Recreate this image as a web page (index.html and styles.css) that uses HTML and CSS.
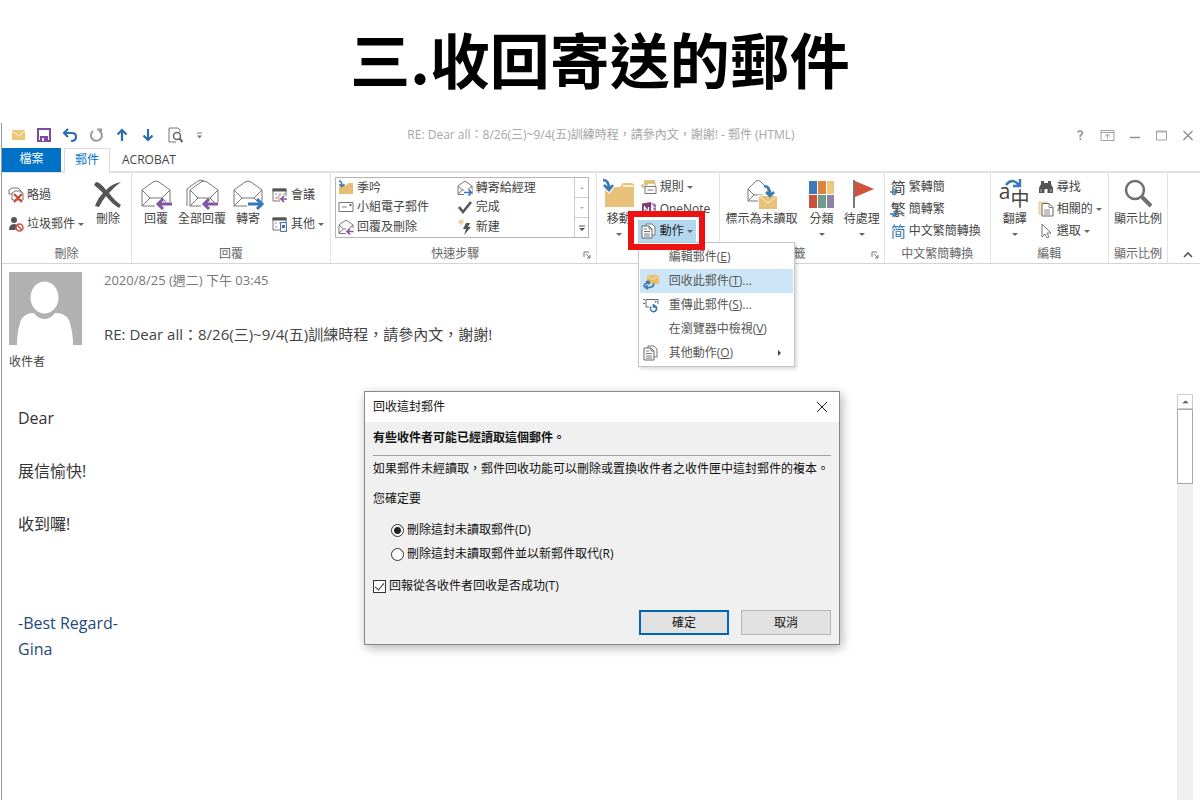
FILE: index.html
```html
<!DOCTYPE html>
<html lang="zh-Hant">
<head>
<meta charset="utf-8">
<meta name="viewport" content="width=device-width, initial-scale=1">
<title>三.收回寄送的郵件</title>
<link rel="stylesheet" href="styles.css">
</head>
<body>
<svg class="defs" aria-hidden="true">
  <symbol id="envelope" viewBox="0 0 32 30">
    <path d="M2 11 13 3q3-2 6 0l11 8v16H2z" fill="#fff" stroke="#777"/>
    <path d="M2 11l8 8h12l8-8M2 27l8-8M30 27l-8-8" fill="none" stroke="#777"/>
  </symbol>
  <symbol id="letter" viewBox="0 0 16 16">
    <path d="M1 6l5.500-4q1.500-1 3 0L15 6v8.500H1z" fill="#fff" stroke="#777"/>
    <path d="M1 6l4.500 4h5L15 6M1 14l4.500-4" fill="none" stroke="#777"/>
  </symbol>
  <symbol id="pages" viewBox="0 0 16 16">
    <path d="M5 3V1h6l3 3v8h-3" fill="#fff" stroke="#777"/>
    <path d="M1 3h7l3 3v9H1z" fill="#fff" stroke="#666"/>
    <path d="M8 3v3h3M3 6h3M3 8.500h6M3 11h6M3 13h6" fill="none" stroke="#777"/>
  </symbol>
  <symbol id="calendar" viewBox="0 0 16 16">
    <path d="M1 2h13v12H1z" fill="#fff" stroke="#777"/>
    <path d="M0.500 1.500h14v3h-14z" fill="#555"/>
    <path d="M3 7h2M7 7h2M11 7h2M3 11h2" stroke="#888"/>
  </symbol>
</svg>
<h1 class="headline">三.收回寄送的郵件</h1>
<main class="window">
  <header class="titlebar">
    <div class="quick">
      <button aria-label="郵件"><svg viewBox="0 0 16 16"><path d="M2 3h13v10H2z" fill="#edc778"/><path d="m2 4 6.500 5L15 4" fill="none" stroke="#fff6e0"/></svg></button>
      <button aria-label="儲存"><svg viewBox="0 0 16 16"><path d="M2 2h12v12H2z" fill="#fff" stroke="#7d4ba0" stroke-width="2"/><path d="M4 9h8v6H4z" fill="#7d4ba0"/><path d="M6 11h2v3H6z" fill="#fff"/></svg></button>
      <button aria-label="復原"><svg viewBox="0 0 16 16"><path d="M6 2 2 6l4 4M2 6h8q4 0 4 4t-5 4" fill="none" stroke="#2e6db0" stroke-width="2.200"/></svg></button>
      <button aria-label="重做"><svg viewBox="0 0 16 16"><path d="M5 4a5.500 5.500 0 1 0 6-0.500M9 2.500h4v4" fill="none" stroke="#9b9b9b" stroke-width="2"/></svg></button>
      <button aria-label="上一個項目"><svg viewBox="0 0 16 16"><path d="M8 14V4M3.500 7.500 8 3l4.500 4.500" fill="none" stroke="#2e6db0" stroke-width="2.200"/></svg></button>
      <button aria-label="下一個項目"><svg viewBox="0 0 16 16"><path d="M8 2v10M3.500 8.500 8 13l4.500-4.500" fill="none" stroke="#2e6db0" stroke-width="2.200"/></svg></button>
      <button aria-label="預覽列印"><svg viewBox="0 0 16 16"><path d="M14 5V3l-2-2H3v14h7" fill="none" stroke="#777"/><circle cx="11" cy="9" r="3.500" fill="#fff" stroke="#666" stroke-width="1.500"/><path d="m13.500 11.500 3 3.500" stroke="#666" stroke-width="2"/></svg></button>
      <button aria-label="自訂"><svg viewBox="0 0 16 16"><path d="M5 6h5" stroke="#777"/><path d="M5 8.500h5l-2.500 3z" fill="#777"/></svg></button>
    </div>
    <div class="caption">RE: Dear all：8/26(三)~9/4(五)訓練時程，請參內文，謝謝! - 郵件 (HTML)</div>
    <div class="controls">
      <button aria-label="說明"><svg viewBox="0 0 16 16"><path d="M6 5.500Q6 4 8 4t2.500 1.800Q10.500 7 8.300 8.500V10M8.300 11v2" fill="none" stroke="#909090" stroke-width="1.600"/></svg></button>
      <button aria-label="功能區顯示選項"><svg viewBox="0 0 16 16"><path d="M2 3.500h13v10H2zM2 5.500h13M8.500 12V7M6 9.500 8.500 7 11 9.500" fill="none" stroke="#a0a0a0"/></svg></button>
      <button aria-label="最小化"><svg viewBox="0 0 16 16"><path d="M4 10.500h10" stroke="#909090" stroke-width="1.500"/></svg></button>
      <button aria-label="最大化"><svg viewBox="0 0 16 16"><path d="M3.500 4h10v9h-10zM3.500 5h10" fill="none" stroke="#a0a0a0"/></svg></button>
      <button aria-label="關閉"><svg viewBox="0 0 16 16"><path d="m3.500 4 9 9M12.500 4l-9 9" stroke="#8a8a8a" stroke-width="1.300"/></svg></button>
    </div>
  </header>
  <nav class="tabs">
    <button class="tab file">檔案</button>
    <button class="tab current">郵件</button>
    <button class="tab">ACROBAT</button>
  </nav>
  <div class="ribbon">
    <section class="group g-delete">
      <div class="tools">
        <div class="stack wide">
          <button class="cmd"><svg viewBox="0 0 16 16"><path d="M1 7V3l3-2h6l3 3v2M1 7h3M4 13V6l3-2h6l2 2v7z" fill="#fff" stroke="#777"/><path d="m6 7 8 8M14 7l-8 8" stroke="#c9442c" stroke-width="2"/></svg>略過</button>
          <button class="cmd"><svg viewBox="0 0 16 16"><circle cx="6" cy="4" r="3" fill="#555"/><path d="M1 14q0-6 5-6 3 0 4 2l-3 4z" fill="#555"/><circle cx="11.500" cy="11.500" r="3.500" fill="#fff" stroke="#d2513c" stroke-width="1.500"/><path d="m9 9 5 5" stroke="#d2513c" stroke-width="1.500"/></svg>垃圾郵件<i class="caret"></i></button>
        </div>
        <button class="big"><svg viewBox="0 0 32 30"><path d="M4 3q4 0 10 8Q21 4 29 3q-7 5-12 11 6 8 12 12l-2 3q-8-5-13-12-4 5-7 11l-4-1q3-8 8-13Q7 10 2 6z" fill="#555"/></svg>刪除</button>
      </div>
      <h2 class="label">刪除</h2>
    </section>
    <section class="group g-reply">
      <div class="tools">
        <button class="big"><svg viewBox="0 0 32 30"><use href="#envelope"/><path d="M15 23h19v6H15z" fill="#fff"/><path d="M32 25H18M23 20l-5 5 5 5" fill="none" stroke="#8355a6" stroke-width="3"/></svg>回覆</button>
        <button class="big"><svg viewBox="0 0 32 30"><path d="M1 27V10L12 2q3-2 6 0" fill="none" stroke="#777"/><use href="#envelope" x="2"/><path d="M15 23h19v6H15z" fill="#fff"/><path d="M32 25H18M23 20l-5 5 5 5" fill="none" stroke="#8355a6" stroke-width="3"/></svg>全部回覆</button>
        <button class="big"><svg viewBox="0 0 32 30"><use href="#envelope"/><path d="M15 23h17v6H15z" fill="#fff"/><path d="M16 25h14M25 20l5 5-5 5" fill="none" stroke="#3878b5" stroke-width="3"/></svg>轉寄</button>
        <div class="stack wide">
          <button class="cmd"><svg viewBox="0 0 16 16"><use href="#calendar"/><path d="M6 9h3v3H6z" fill="#fff" stroke="#d98b4a"/><path d="M8 9h8v7H8z" fill="#fff"/><path d="M15 12H9M12 9l-3 3 3 3" fill="none" stroke="#8355a6" stroke-width="1.700"/></svg>會議</button>
          <button class="cmd"><svg viewBox="0 0 16 16"><use href="#calendar"/><path d="M8.500 6.500h6v9h-6z" fill="#eef3fb" stroke="#4d70a8"/><path d="M10 9h3v3h-3z" fill="#4d70a8"/></svg>其他<i class="caret"></i></button>
        </div>
      </div>
      <h2 class="label">回覆</h2>
    </section>
    <section class="group g-quick">
      <div class="tools">
        <div class="gallery">
          <div class="choices">
            <button class="cmd"><svg viewBox="0 0 16 16"><path d="M1 5h8l1-2h5v11H1z" fill="#e6be73"/><path d="M1 1q3 0 3 5M1.500 4 4 6.500 6.500 4" fill="none" stroke="#3878b5" stroke-width="1.400"/></svg>季吟</button>
            <button class="cmd"><svg viewBox="0 0 16 16"><use href="#letter"/><path d="M7 9h8v7H7z" fill="#fff"/><path d="M7 12.500h7.500M11.500 9.500l3 3-3 3" fill="none" stroke="#3878b5" stroke-width="1.700"/></svg>轉寄給經理</button>
            <button class="cmd"><svg viewBox="0 0 16 16"><path d="M1 3.500h14v9H1z" fill="#fff" stroke="#777"/><path d="M4 8h5" stroke="#888"/><path d="M11.500 5h2v2h-2z" fill="#666"/></svg>小組電子郵件</button>
            <button class="cmd"><svg viewBox="0 0 16 16"><path d="m2 8 4 5 8-10" fill="none" stroke="#555" stroke-width="2.600"/></svg>完成</button>
            <button class="cmd"><svg viewBox="0 0 16 16"><use href="#letter"/><path d="M8 9h8v7H8z" fill="#fff"/><path d="M15.500 12.500H9M12 9.500l-3 3 3 3" fill="none" stroke="#8355a6" stroke-width="1.700"/></svg>回覆及刪除</button>
            <button class="cmd"><svg viewBox="0 0 16 16"><path d="M4 0v6M1 3h6M2 1l4 4M6 1 2 5" stroke="#eac98f"/><path d="M9 4h4l-2 4h3l-7 8 2-6H6z" fill="#555"/></svg>新建</button>
          </div>
          <div class="scroller">
            <button aria-label="上"><svg viewBox="0 0 14 18"><path d="M5 10h4L7 8z" fill="#aaa"/></svg></button>
            <button aria-label="下"><svg viewBox="0 0 14 18"><path d="M5 8h4l-2 2z" fill="#aaa"/></svg></button>
            <button aria-label="更多"><svg viewBox="0 0 14 18"><path d="M4 7h6" stroke="#555"/><path d="M4 9h6l-3 3z" fill="#555"/></svg></button>
          </div>
        </div>
      </div>
      <h2 class="label">快速步驟</h2>
      <svg class="launcher" viewBox="0 0 8 8"><path d="M1 6V1h5M3 3l4 4M7 4v3H4" fill="none" stroke="#777"/></svg>
    </section>
    <section class="group g-move">
      <div class="tools">
        <button class="big"><svg viewBox="0 0 32 30"><path d="M2 8h15l3-4h8q3 0 3 3v21H2z" fill="#e8c27b"/><path d="M20 7h10" stroke="#fff1cf" stroke-width="2"/><path d="M0 1q6 0 6 9M1 6l5 5 4-5" fill="none" stroke="#fff" stroke-width="5"/><path d="M0 1q6 0 6 9M1 6l5 5 4-5" fill="none" stroke="#3878b5" stroke-width="2.600"/></svg>移動<i class="caret"></i></button>
        <div class="stack">
          <button class="cmd"><svg viewBox="0 0 16 16"><path d="M3 1h11v4H3z" fill="#e8c27b"/><path d="M1 6h5V4h8v4H1z" fill="#fff" stroke="#c8a25c"/><path d="M4 7.500h11v7H4zM6.500 11h6" fill="#fff" stroke="#777"/></svg>規則<i class="caret"></i></button>
          <button class="cmd"><svg viewBox="0 0 16 16"><path d="M8 3h6v11H8z" fill="#fff" stroke="#8b3f97"/><path d="M1 2.500 10 1v15l-9-1.500z" fill="#80397b"/><path d="M3.500 11V6l4 5V6" fill="none" stroke="#fff" stroke-width="1.300"/><path d="M12 5h3M12 8h3M12 11h3" stroke="#8b3f97"/></svg>OneNote</button>
          <div class="drop">
            <button class="cmd active" aria-expanded="true"><svg viewBox="0 0 16 16"><use href="#pages"/></svg>動作<i class="caret"></i></button>
            <div class="menu" role="menu">
              <button role="menuitem"><span class="pic"></span>編輯郵件(<u>E</u>)</button>
              <button role="menuitem" class="hot"><svg class="pic" viewBox="0 0 16 16"><path d="M4 2h12v9H4z" fill="#e8bd6c"/><path d="m4 2.500 6 4 6-4" fill="none" stroke="#f7e3b8"/><path d="M1 14q0-4 4-4M3 8.500h3v3M11 10.500q-1 4-5 4H3M4.500 12l-2 2.500 2.500 1.500" fill="none" stroke="#3878b5" stroke-width="1.700"/></svg>回收此郵件(<u>T</u>)...</button>
              <button role="menuitem"><svg class="pic" viewBox="0 0 16 16"><path d="M0 2.500h2M3 2.500h12V7M3 2.500V10h3M0 6.500h2" fill="none" stroke="#666"/><path d="M12 4h1.500v1.500H12z" fill="#666"/><path d="M8 9.500q-1.500 2 0 4 2 2 4.500 0.500 2-2 0.500-4.500l-2-1M10.500 7v3h3" fill="none" stroke="#3878b5" stroke-width="1.600"/></svg>重傳此郵件(<u>S</u>)...</button>
              <button role="menuitem"><span class="pic"></span>在瀏覽器中檢視(<u>V</u>)</button>
              <button role="menuitem"><svg class="pic" viewBox="0 0 16 16"><use href="#pages"/></svg>其他動作(<u>O</u>)<svg class="sub" viewBox="0 0 6 8"><path d="M1 1l3 3-3 3z" fill="#444"/></svg></button>
            </div>
            <span class="marker"></span>
          </div>
        </div>
      </div>
    </section>
    <section class="group g-tags">
      <div class="tools">
        <button class="big"><svg viewBox="0 0 32 30"><path d="M2 10 10 2q2-1 4 0l8 8v12H2z" fill="#fff" stroke="#777"/><path d="m2 10 6 6h9M2 22l6-6" fill="none" stroke="#777"/><path d="M12 16h20v14H12z" fill="#fff"/><path d="M13 17h18v13H13z" fill="#e8c27b"/><path d="m13 17 9 7 9-7" fill="none" stroke="#fff1cf"/><path d="M18 7q6 0 6 9M20 13l4 4 4-4" fill="none" stroke="#3878b5" stroke-width="2.600"/></svg>標示為未讀取</button>
        <button class="big"><svg viewBox="0 0 32 30"><path d="M3 2h8v13H3z" fill="#3d79b6"/><path d="M12 2h8v13h-8z" fill="#dc8440"/><path d="M21 2h7v13h-7z" fill="#efc67d"/><path d="M3 16h8v13H3z" fill="#c9523c"/><path d="M12 16h8v13h-8z" fill="#719c8c"/><path d="M21 16h7v13h-7z" fill="#8c83a2"/></svg>分類<i class="caret"></i></button>
        <button class="big"><svg viewBox="0 0 32 30"><path d="M7 1h2v28H7z" fill="#777"/><path d="m9 2 19 8-19 8z" fill="#d2513c"/></svg>待處理<i class="caret"></i></button>
      </div>
      <h2 class="label">標籤</h2>
      <svg class="launcher" viewBox="0 0 8 8"><path d="M1 6V1h5M3 3l4 4M7 4v3H4" fill="none" stroke="#777"/></svg>
    </section>
    <section class="group g-chinese">
      <div class="tools">
        <div class="stack">
          <button class="cmd"><span class="glyph">简<svg viewBox="0 0 8 8"><path d="M0 4h6M4 1l3 3-3 3" fill="none" stroke="#3878b5" stroke-width="1.500"/></svg></span>繁轉簡</button>
          <button class="cmd"><span class="glyph">繁<svg viewBox="0 0 8 8"><path d="M0 4h6M4 1l3 3-3 3" fill="none" stroke="#3878b5" stroke-width="1.500"/></svg></span>簡轉繁</button>
          <button class="cmd"><span class="glyph blue">简</span>中文繁簡轉換</button>
        </div>
      </div>
      <h2 class="label">中文繁簡轉換</h2>
    </section>
    <section class="group g-edit">
      <div class="tools">
        <button class="big"><span class="translate"><svg viewBox="0 0 32 30"><path d="M7 6q6-8 13 0M21 0v7h-7" fill="none" stroke="#3878b5" stroke-width="2.400"/></svg><b>a</b><b>中</b></span>翻譯<i class="caret"></i></button>
        <div class="stack">
          <button class="cmd"><svg viewBox="0 0 16 16"><path d="M3 2h3v2h4V2h3v3l2 4v5H9.500v-4h-3v4H1V9l2-4z" fill="#555"/><path d="M3 10v3M13 10v3" stroke="#bbb"/></svg>尋找</button>
          <button class="cmd"><svg viewBox="0 0 16 16"><path d="M1 1h8v12H1z" fill="#f7e6bd" stroke="#e3c88c"/><path d="M4 2.500h7l4 4V15H4z" fill="#fff" stroke="#666"/><path d="M11 2.500v4h4M6 9h6M6 11h6M6 13h6" fill="none" stroke="#888"/></svg>相關的<i class="caret"></i></button>
          <button class="cmd"><svg viewBox="0 0 16 16"><path d="m4 1 9 9H9l2 4-2 1-2-4-3 3z" fill="#fff" stroke="#777"/></svg>選取<i class="caret"></i></button>
        </div>
      </div>
      <h2 class="label">編輯</h2>
    </section>
    <section class="group g-zoom">
      <div class="tools">
        <button class="big"><svg viewBox="0 0 32 30"><circle cx="13" cy="11" r="9" fill="none" stroke="#707070" stroke-width="2.500"/><path d="m20 18 9 9" stroke="#707070" stroke-width="4"/></svg>顯示比例</button>
      </div>
      <h2 class="label">顯示比例</h2>
    </section>
    <button class="collapse" aria-label="摺疊功能區"><svg viewBox="0 0 10 8"><path d="m1 6 4-4 4 4" fill="none" stroke="#555" stroke-width="1.600"/></svg></button>
  </div>
  <section class="message-head">
    <div class="person">
      <svg viewBox="0 0 73 73"><path d="M0 0h73v73H0z" fill="#b1b1b1"/><ellipse cx="35.500" cy="25.500" rx="14" ry="16" fill="#fff"/><path d="M8 73c0-9 1-16 3-22 2-7 7-10 14-10 6 8 15 8 21 0 8 0 13 3 15 10 2 7 3 14 3 22z" fill="#fff"/></svg>
      <span>收件者</span>
    </div>
    <div class="meta">
      <p class="date">2020/8/25 (週二) 下午 03:45</p>
      <p class="subject">RE: Dear all：8/26(三)~9/4(五)訓練時程，請參內文，謝謝!</p>
    </div>
  </section>
  <section class="message">
    <article class="text">
      <p>Dear</p>
      <p>展信愉快!</p>
      <p>收到囉!</p>
      <p class="sign">-Best Regard-<br>Gina</p>
    </article>
    <div class="scrollbar">
      <button aria-label="向上捲動"><svg viewBox="0 0 14 14"><path d="M4 9h7L7.500 6z" fill="#555"/></svg></button>
      <div class="thumb"></div>
    </div>
  </section>
</main>
<form class="dialog" role="dialog" aria-labelledby="dialog-title">
  <header class="dialog-bar">
    <h2 id="dialog-title">回收這封郵件</h2>
    <button type="button" aria-label="關閉"><svg viewBox="0 0 12 12"><path d="m1 1 10 10M11 1 1 11" stroke="#222"/></svg></button>
  </header>
  <div class="dialog-body">
    <p class="notice">有些收件者可能已經讀取這個郵件。</p>
    <p class="explain">如果郵件未經讀取，郵件回收功能可以刪除或置換收件者之收件匣中這封郵件的複本。</p>
    <fieldset>
      <legend>您確定要</legend>
      <label><input type="radio" name="recall" checked>刪除這封未讀取郵件(D)</label>
      <label><input type="radio" name="recall">刪除這封未讀取郵件並以新郵件取代(R)</label>
    </fieldset>
    <label class="report"><input type="checkbox" checked>回報從各收件者回收是否成功(T)</label>
    <div class="actions">
      <button type="button" class="primary">確定</button>
      <button type="button">取消</button>
    </div>
  </div>
</form>
</body>
</html>
```
FILE: styles.css
```css
* { box-sizing: border-box; }
body {
  margin: 0;
  min-height: 100vh;
  display: flex;
  flex-direction: column;
  position: relative;
  background: #fff;
  color: #444;
  font: 12px/16px "Open Sans", "Noto Sans CJK TC", sans-serif;
}
h1, h2, p, fieldset { margin: 0; padding: 0; border: 0; font-weight: 400; }
h2 { font-size: 12px; }
button {
  margin: 0;
  padding: 0;
  border: 0;
  background: none;
  color: inherit;
  font: inherit;
  white-space: nowrap;
}
svg { display: block; flex: none; overflow: visible; }
.defs { position: absolute; width: 0; height: 0; }

.headline {
  padding-bottom: 7px;
  color: #000;
  font: 700 60px/116px "Noto Sans CJK TC", sans-serif;
  text-align: center;
}
.window {
  flex: 1;
  display: flex;
  flex-direction: column;
  margin-left: 1px;
  border-left: 1px solid #999;
}

/* title bar */
.titlebar {
  display: grid;
  grid-template-columns: 1fr auto 1fr;
  align-items: center;
  height: 25px;
  padding-bottom: 1px;
}
.quick, .controls { display: flex; }
.quick { gap: 10px; padding-left: 8px; }
.controls { gap: 11px; justify-content: flex-end; padding-right: 4px; }
.titlebar svg { width: 16px; height: 16px; }
.caption { color: #a6a6a6; }

/* tabs */
.tabs {
  display: flex;
  height: 25px;
  border-bottom: 2px solid #e1e1e1;
}
.tab { height: 25px; padding: 0 12px 2px; }
.tab.file { width: 59px; height: 24px; margin-right: 3px; background: #0072c6; color: #fff; }
.tab.current {
  width: 46px;
  padding: 0 0 2px;
  border: 1px solid #dcdcdc;
  border-bottom: 0;
  background: #fff;
  color: #0072c6;
}

/* ribbon */
.ribbon {
  display: flex;
  height: 91px;
  border-bottom: 1px solid #d5d5d5;
}
.group {
  position: relative;
  display: flex;
  flex-direction: column;
  flex: 1 1 0;
  border-right: 1px solid #e4e4e4;
}
.g-delete { flex-grow: 130; }
.g-reply { flex-grow: 199; }
.g-quick { flex-grow: 267; }
.g-move { flex-grow: 123; }
.g-tags { flex-grow: 165; }
.g-chinese { flex-grow: 106; }
.g-edit { flex-grow: 118; }
.g-zoom { flex-grow: 59; }
.tools { display: flex; height: 72px; padding: 3px 4px 0; }
.g-delete .tools { gap: 6px; }
.g-reply .tools { gap: 6px; padding-left: 8px; }
.g-move .tools { gap: 3px; padding-left: 6px; }
.g-edit .tools { gap: 5px; padding-left: 8px; }
.g-zoom .tools { justify-content: center; }
.label { color: #666; line-height: 18px; text-align: center; }
.g-quick .label, .g-tags .label { padding-right: 16px; }
.launcher { position: absolute; right: 5px; bottom: 4px; width: 8px; height: 8px; }
.big {
  display: flex;
  flex-direction: column;
  align-items: center;
  flex: none;
  min-width: 32px;
  height: 64px;
  padding-top: 3px;
}
.big > svg, .translate { width: 32px; height: 30px; margin-bottom: 2px; }
.g-tags .tools { gap: 6px; padding-left: 6px; }
.g-tags .big:first-child { margin-right: 2px; }
.caret {
  flex: none;
  margin-left: 3px;
  border: 3px solid transparent;
  border-top-color: #666;
  border-bottom: 0;
}
.big .caret { margin: 6px 0 0; }
.stack { display: flex; flex-direction: column; align-items: flex-start; }
.stack.wide { gap: 7px; padding-top: 8px; }
.cmd {
  display: flex;
  align-items: center;
  gap: 3px;
  height: 22px;
  padding: 0 2px;
}
.g-move .cmd { padding: 0 3px; }
.cmd > svg { width: 16px; height: 16px; }
.cmd .caret { margin-left: 0; }

.gallery {
  display: flex;
  flex: 1;
  height: 61px;
  margin: 1px 3px 0 0;
  border: 1px solid #b5b5b5;
}
.choices {
  display: grid;
  flex: 1;
  grid-template: repeat(3, 1fr) / 1fr 1fr;
}
.choices .cmd { height: auto; }
.scroller { display: flex; flex-direction: column; width: 14px; border-left: 1px solid #ccc; }
.scroller button { flex: 1; }
.scroller button + button { border-top: 1px solid #ccc; }
.scroller svg { width: 14px; height: 18px; }

.drop { position: relative; }
.active { background: #b4d7f0; color: #222; }
.marker {
  position: absolute;
  inset: -9px -9px -8px -10px;
  border: 6px solid #ee1111;
  z-index: 3;
}
.menu {
  position: absolute;
  top: 22px;
  left: 0;
  z-index: 2;
  width: 157px;
  padding: 2px 1px 1px;
  border: 1px solid #c6c6c6;
  background: #fff;
  box-shadow: 2px 2px 3px rgba(0, 0, 0, .15);
}
.menu button {
  display: flex;
  align-items: center;
  width: 100%;
  height: 24px;
  padding: 0 10px 0 3px;
  color: #555;
}
.menu .hot { background: #cde6f7; }
.pic { flex: none; width: 16px; height: 16px; margin-right: 10px; }
.sub { width: 6px; height: 8px; margin-left: auto; }

.glyph { position: relative; width: 15px; font-size: 15px; }
.glyph svg { position: absolute; left: -1px; bottom: -1px; width: 8px; height: 8px; }
.blue { color: #3878b5; }
.translate { position: relative; display: flex; line-height: 24px; }
.translate svg { position: absolute; inset: 0; width: 32px; height: 30px; }
.translate b { font-weight: 400; font-size: 21px; }
.translate b:last-child { align-self: flex-end; font-size: 19px; line-height: 20px; }
.collapse { flex: 32 1 0; display: flex; align-items: flex-end; justify-content: flex-end; }
.collapse svg { width: 10px; height: 8px; margin: 0 7px 4px 0; }

/* message */
.message-head { display: flex; gap: 22px; padding: 8px 7px 0; height: 122px; }
.person { width: 73px; }
.person svg { width: 73px; height: 73px; margin-bottom: 9px; }
.date { margin-bottom: 36px; color: #777; font-size: 13px; }
.subject { font-size: 15px; line-height: 20px; }
.message { flex: 1; display: flex; padding: 8px 7px 0 16px; }
.text { flex: 1; padding-top: 11px; color: #333; font-size: 16px; line-height: 26px; }
.text p { margin-bottom: 27px; }
.text .sign { margin-top: 73px; color: #1f497d; }
.scrollbar { width: 16px; background: #f0f0f0; }
.scrollbar button { display: block; width: 16px; height: 15px; border: 1px solid #ccc; background: #fff; }
.scrollbar svg { width: 14px; height: 13px; }
.thumb { height: 75px; border: 1px solid #aaa; background: #fff; }

/* recall dialog */
.dialog {
  position: absolute;
  top: 391px;
  left: 50%;
  z-index: 5;
  width: 476px;
  margin-left: -236px;
  border: 1px solid #888;
  background: #f0f0f0;
  box-shadow: 2px 3px 10px rgba(0, 0, 0, .3);
  color: #111;
}
.dialog-bar {
  display: flex;
  align-items: center;
  justify-content: space-between;
  height: 30px;
  padding: 0 11px 0 8px;
  background: #fff;
}
.dialog-bar svg { width: 12px; height: 12px; }
.dialog-body { padding: 8px 8px 9px; }
.notice { padding-bottom: 9px; border-bottom: 1px solid #a0a0a0; font-weight: 700; }
.explain { padding: 5px 0 14px; white-space: nowrap; }
legend { padding: 0; margin-bottom: 11px; }
.dialog label { display: flex; align-items: center; gap: 3px; height: 24px; }
fieldset label { padding-left: 18px; }
.report { margin-top: 8px; }
.dialog input {
  appearance: none;
  flex: none;
  width: 13px;
  height: 13px;
  margin: 0;
  border: 1px solid #333;
  background: #fff;
}
.dialog input[type="radio"] { border-radius: 50%; }
.dialog input[type="radio"]:checked { background: radial-gradient(circle, #222 0 3px, #fff 4px); }
.dialog input[type="checkbox"]:checked::after {
  content: "";
  display: block;
  width: 4px;
  height: 8px;
  margin: 0 0 0 3px;
  border: solid #333;
  border-width: 0 1px 1px 0;
  transform: rotate(40deg);
}
.actions { display: flex; justify-content: flex-end; gap: 12px; margin-top: 12px; }
.actions button { width: 90px; height: 25px; border: 1px solid #b5b5b5; background: #e1e1e1; }
.actions .primary { border: 2px solid #0067b8; }
```
